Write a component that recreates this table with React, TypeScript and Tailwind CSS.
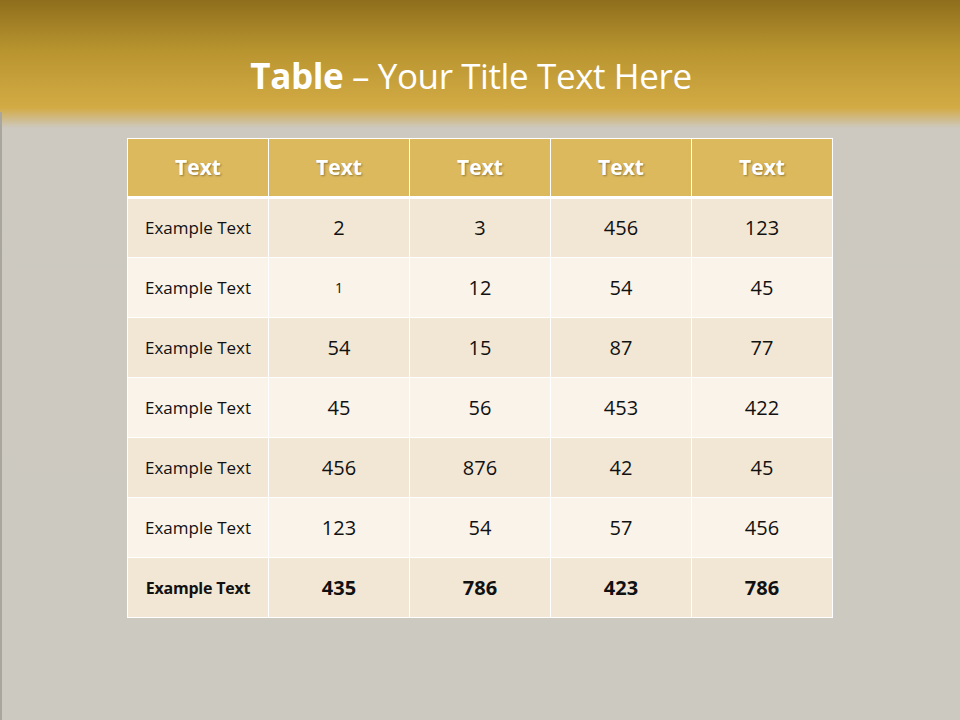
const header = ['Text', 'Text', 'Text', 'Text', 'Text']

const rows: { label: string; values: string[]; small?: number[] }[] = [
  { label: 'Example Text', values: ['2', '3', '456', '123'] },
  { label: 'Example Text', values: ['1', '12', '54', '45'], small: [0] },
  { label: 'Example Text', values: ['54', '15', '87', '77'] },
  { label: 'Example Text', values: ['45', '56', '453', '422'] },
  { label: 'Example Text', values: ['456', '876', '42', '45'] },
  { label: 'Example Text', values: ['123', '54', '57', '456'] },
]

const total = { label: 'Example Text', values: ['435', '786', '423', '786'] }

export default function App() {
  return (
    <div className="relative w-[960px] h-[720px] overflow-hidden bg-[linear-gradient(to_bottom,#8f6e1d_0px,#b8942f_50px,#d3ab45_108px,#cdc9c1_128px,#ccc9c1_720px)] font-['Open_Sans',sans-serif]">
      <div className="absolute left-0 top-[112px] bottom-0 w-[2px] bg-[#a9a6a0]" />
      <div className="h-[138px] pt-[14px] pr-[18px] flex items-center justify-center">
        <h1 className="text-[35px] text-white tracking-[-0.4px]">
          <span className="font-bold">Table</span> – Your Title Text Here
        </h1>
      </div>
      <table className="mx-auto w-[706px] border-collapse table-fixed">
        <thead>
          <tr className="h-[59px] bg-[#dcb95d]">
            {header.map((h, i) => (
              <th
                key={i}
                className="w-[141px] border border-white border-b-[3px] text-[21px] font-bold text-white [text-shadow:1px_1px_2px_rgba(0,0,0,0.35)]"
              >
                {h}
              </th>
            ))}
          </tr>
        </thead>
        <tbody>
          {rows.map((r, ri) => (
            <tr key={ri} className={`h-[60px] ${ri % 2 === 0 ? 'bg-[#f2e7d5]' : 'bg-[#faf3ea]'}`}>
              <td className="border border-white text-center text-[17px] text-[#111]">{r.label}</td>
              {r.values.map((v, vi) => (
                <td
                  key={vi}
                  className={`border border-white text-center text-[#111] ${r.small?.includes(vi) ? 'text-[14px]' : 'text-[20px]'}`}
                >
                  {v}
                </td>
              ))}
            </tr>
          ))}
          <tr className="h-[60px] bg-[#f2e7d5]">
            <td className="border border-white text-center text-[16px] font-bold text-[#111] tracking-[-0.2px]">{total.label}</td>
            {total.values.map((v, vi) => (
              <td key={vi} className="border border-white text-center text-[20px] font-bold text-[#111]">
                {v}
              </td>
            ))}
          </tr>
        </tbody>
      </table>
    </div>
  )
}
